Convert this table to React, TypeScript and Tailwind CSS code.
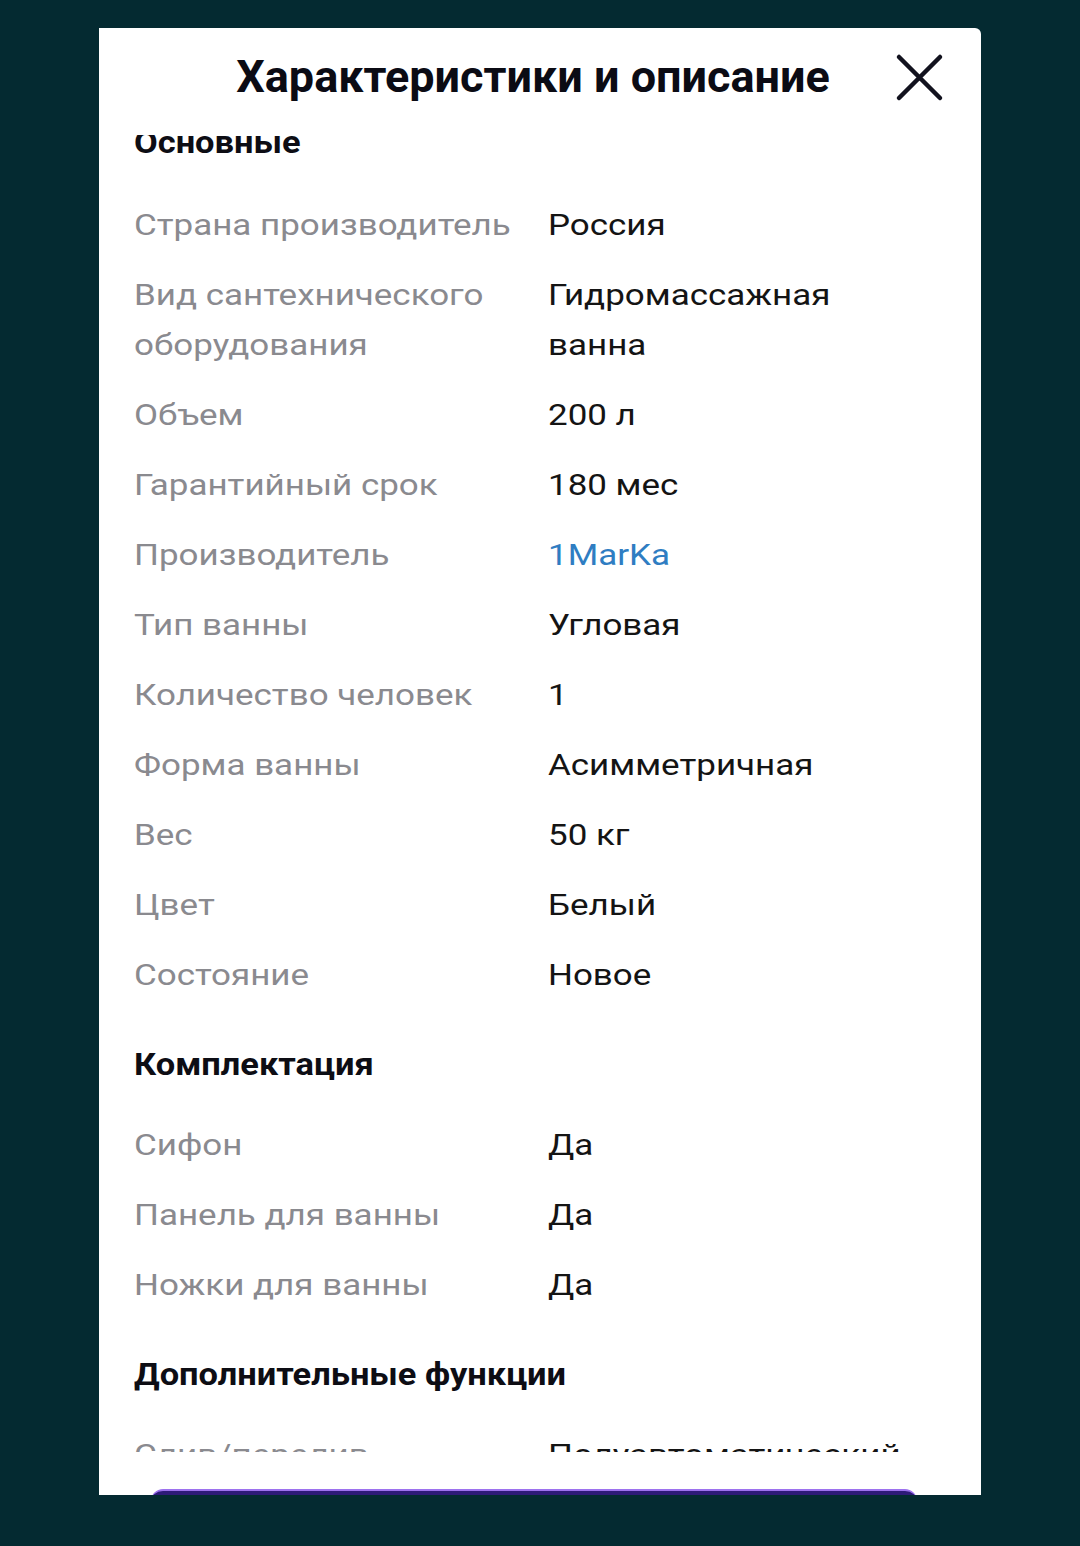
import React from "react";

type Row = { label: string[]; value: string[]; link?: boolean };

const main: Row[] = [
  { label: ["Страна производитель"], value: ["Россия"] },
  { label: ["Вид сантехнического", "оборудования"], value: ["Гидромассажная", "ванна"] },
  { label: ["Объем"], value: ["200 л"] },
  { label: ["Гарантийный срок"], value: ["180 мес"] },
  { label: ["Производитель"], value: ["1MarKa"], link: true },
  { label: ["Тип ванны"], value: ["Угловая"] },
  { label: ["Количество человек"], value: ["1"] },
  { label: ["Форма ванны"], value: ["Асимметричная"] },
  { label: ["Вес"], value: ["50 кг"] },
  { label: ["Цвет"], value: ["Белый"] },
  { label: ["Состояние"], value: ["Новое"] },
];

const kit: Row[] = [
  { label: ["Сифон"], value: ["Да"] },
  { label: ["Панель для ванны"], value: ["Да"] },
  { label: ["Ножки для ванны"], value: ["Да"] },
];

const extra: Row[] = [{ label: ["Слив/перелив"], value: ["Полуавтоматический"] }];

function Line({ text }: { text: string }) {
  return (
    <div className="h-[50px] leading-[50px] whitespace-nowrap">
      <span className="inline-block origin-left scale-x-[1.165]">{text}</span>
    </div>
  );
}

function RowView({ r, first }: { r: Row; first?: boolean }) {
  return (
    <div className={`flex ${first ? "" : "mt-[20px]"}`}>
      <div className="w-[414px] shrink-0 text-[#8a8a8f]">
        {r.label.map((l) => (
          <Line key={l} text={l} />
        ))}
      </div>
      <div className={r.link ? "text-[#2f7dc2]" : "text-[#141414]"}>
        {r.value.map((v) => (
          <Line key={v} text={v} />
        ))}
      </div>
    </div>
  );
}

function Heading({ children, className }: { children: React.ReactNode; className?: string }) {
  return (
    <div className={`h-[40px] leading-[40px] font-bold text-[31px] text-[#0d0d14] whitespace-nowrap ${className ?? ""}`}>
      <span className="inline-block origin-left scale-x-[1.11]">{children}</span>
    </div>
  );
}

export default function App() {
  return (
    <div
      className="w-[1080px] h-[1546px] bg-[#042a31] pt-[28px] pl-[99px]"
      style={{ fontFamily: "Roboto, 'Noto Sans', sans-serif" }}
    >
      <div className="w-[882px] h-[1467px] bg-white rounded-tr-[6px] overflow-hidden flex flex-col relative">
        <div className="h-[107px] shrink-0 flex items-center relative">
          <div className="w-full text-center font-bold text-[45px] text-[#0b0b14] pr-[14px] -mt-[9px]">
            Характеристики и описание
          </div>
          <svg
            className="absolute left-[796px] top-[25px]"
            width="50"
            height="50"
            viewBox="0 0 50 50"
          >
            <path d="M4 4 L45 45 M45 4 L4 45" stroke="#12121e" strokeWidth="4.5" strokeLinecap="round" />
          </svg>
        </div>
        <div className="h-[1317px] shrink-0 overflow-hidden pl-[35px] text-[30px]">
          <Heading className="-mt-[12px]">Основные</Heading>
          <div className="mt-[37px]">
            {main.map((r, i) => (
              <RowView key={i} r={r} first={i === 0} />
            ))}
          </div>
          <Heading className="mt-[45px]">Комплектация</Heading>
          <div className="mt-[35px]">
            {kit.map((r, i) => (
              <RowView key={i} r={r} first={i === 0} />
            ))}
          </div>
          <Heading className="mt-[45px]">Дополнительные функции</Heading>
          <div className="mt-[35px]">
            {extra.map((r, i) => (
              <RowView key={i} r={r} first={i === 0} />
            ))}
          </div>
        </div>
        <div className="flex-1 relative">
          <div className="absolute left-[52px] right-[64px] top-[37px] h-[24px] rounded-[12px] bg-[#2e1a78] border-t-2 border-[#9d72ee]" />
        </div>
      </div>
    </div>
  );
}
